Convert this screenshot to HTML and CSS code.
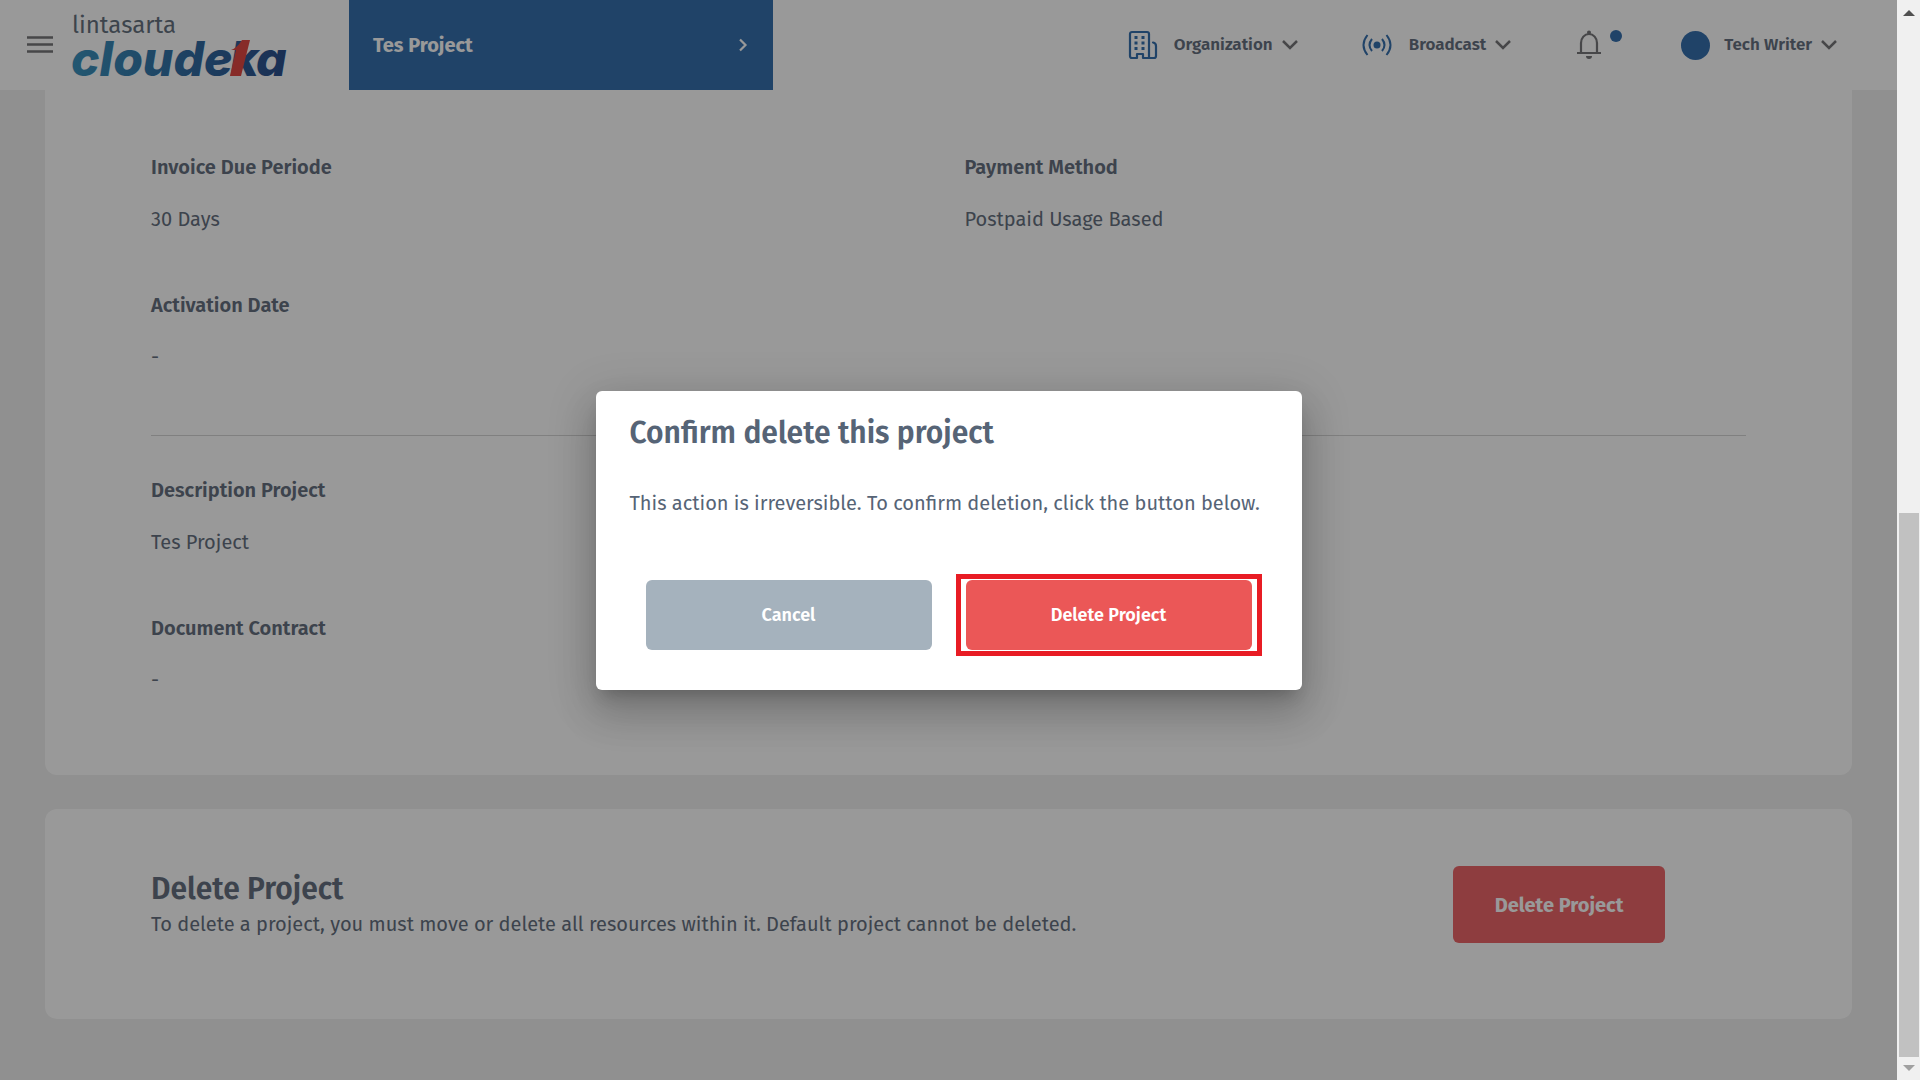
FILE: index.html
```html
<!DOCTYPE html>
<html lang="en">

<head>
    <meta charset="UTF-8">
    <meta name="viewport" content="width=device-width, initial-scale=1.0">
    <title>Project Detail</title>
    <link rel="stylesheet" href="styles.css">
</head>

<body>
    <div class="page">
        <!-- Header -->
        <header class="header">
            <button class="menu-btn" aria-label="Menu">
                <svg width="26" height="18" viewBox="0 0 26 18">
                    <path d="M0 1.5h26M0 8.5h26M0 15.5h26" stroke="#77777a" stroke-width="2.6" />
                </svg>
            </button>
            <a class="logo" href="#" aria-label="Lintasarta Cloudeka">
                <svg width="214" height="66" viewBox="0 0 214 66">
                    <defs>
                        <linearGradient id="logo-blue" gradientUnits="userSpaceOnUse" x1="0" y1="0" x2="212" y2="0">
                            <stop offset="0" stop-color="#3b92bd" />
                            <stop offset="0.5" stop-color="#326fa5" />
                            <stop offset="1" stop-color="#2c4f8c" />
                        </linearGradient>
                    </defs>
                    <text class="logo-top" x="-1" y="21">lintasarta</text>
                    <text class="logo-main" x="-2" y="64">cloude<tspan x="157">k</tspan><tspan x="183">a</tspan></text>
                    <path d="M169 28h8l-9 36h-11l6-26h-5q6-2 11-10z" fill="#e14944" />
                </svg>
            </a>
            <button class="project-btn">
                <span>Tes Project</span>
                <svg width="10" height="14" viewBox="0 0 10 14">
                    <path d="M2 1.5l5.500 5.500L2 12.500" fill="none" stroke="#fff" stroke-width="2.200" />
                </svg>
            </button>
            <nav class="nav">
                <button class="nav-item">
                    <svg width="28" height="28" viewBox="0 0 28 28" fill="none" stroke="#3670ae" stroke-width="2.200">
                        <path d="M20 27h-6v-4H8v4H3a2 2 0 0 1-2-2V3a2 2 0 0 1 2-2h15a2 2 0 0 1 2 2v24h5a2 2 0 0 0 2-2V15q0-3-3-3.500" stroke-linejoin="round" stroke-linecap="round" />
                        <path d="M5.500 6.500h3M12.500 6.500h3M5.500 12h3M12.500 12h3M5.500 17.500h3M12.500 17.500h3" stroke-width="3" />
                    </svg>
                    <span class="nav-text">Organization</span>
                    <svg class="chevron" width="16" height="10" viewBox="0 0 16 10">
                        <path d="M1 1l7 7 7-7" />
                    </svg>
                </button>
                <button class="nav-item">
                    <svg width="30" height="22" viewBox="0 0 30 22" fill="none" stroke="#3670ae" stroke-width="2">
                        <circle cx="15" cy="11" r="3.500" fill="#3670ae" stroke="none" />
                        <path d="M10 5q-5 6 0 12M20 5q5 6 0 12M5.500 1q-8 10 0 20M24.500 1q8 10 0 20" />
                    </svg>
                    <span class="nav-text">Broadcast</span>
                    <svg class="chevron" width="16" height="10" viewBox="0 0 16 10">
                        <path d="M1 1l7 7 7-7" />
                    </svg>
                </button>
                <button class="nav-item bell" aria-label="Notifications">
                    <svg width="46" height="30" viewBox="0 0 46 30">
                        <path d="M0 23h24M4 22V13a8 9 0 0 1 16 0v9M12 4V1" fill="none" stroke="#77777a" stroke-width="2.200" />
                        <circle cx="12" cy="2.500" r="2" fill="#77777a" />
                        <path d="M9 26h6a3 3 0 0 1-6 0z" fill="#77777a" />
                        <circle cx="39" cy="6" r="6" fill="#3670ae" />
                    </svg>
                </button>
                <button class="nav-item">
                    <span class="avatar"></span>
                    <span class="nav-text">Tech Writer</span>
                    <svg class="chevron" width="16" height="10" viewBox="0 0 16 10">
                        <path d="M1 1l7 7 7-7" />
                    </svg>
                </button>
            </nav>
        </header>

        <!-- Project data -->
        <main class="content">
            <section class="card detail">
                <dl class="fields">
                    <div class="field">
                        <dt>Invoice Due Periode</dt>
                        <dd>30 Days</dd>
                    </div>
                    <div class="field">
                        <dt>Payment Method</dt>
                        <dd>Postpaid Usage Based</dd>
                    </div>
                    <div class="field">
                        <dt>Activation Date</dt>
                        <dd>-</dd>
                    </div>
                </dl>
                <hr class="divider">
                <dl class="fields">
                    <div class="field full">
                        <dt>Description Project</dt>
                        <dd>Tes Project</dd>
                    </div>
                    <div class="field full">
                        <dt>Document Contract</dt>
                        <dd>-</dd>
                    </div>
                </dl>
            </section>

            <section class="card delete">
                <div class="delete-info">
                    <h2 class="title">Delete Project</h2>
                    <p class="text">To delete a project, you must move or delete all resources within it. Default project cannot be deleted.</p>
                </div>
                <button class="btn-delete">Delete Project</button>
            </section>
        </main>

        <!-- Confirmation modal -->
        <div class="overlay">
            <div class="modal" role="dialog" aria-modal="true" aria-labelledby="modal-title">
                <h2 class="title" id="modal-title">Confirm delete this project</h2>
                <p class="text">This action is irreversible. To confirm deletion, click the button below.</p>
                <div class="modal-buttons">
                    <button class="btn btn-cancel">Cancel</button>
                    <button class="btn btn-confirm">Delete Project</button>
                </div>
            </div>
        </div>
    </div>

    <!-- Scrollbar -->
    <div class="scrollbar">
        <svg width="12" height="6" viewBox="0 0 12 6">
            <path d="M0 6l6-6 6 6z" fill="#505050" />
        </svg>
        <div class="track">
            <div class="thumb"></div>
        </div>
        <svg width="12" height="6" viewBox="0 0 12 6">
            <path d="M0 0h12L6 6z" fill="#a0a0a0" />
        </svg>
    </div>
</body>

</html>
```
FILE: styles.css
```css
* {
    box-sizing: border-box;
}

body {
    margin: 0;
    height: 100vh;
    display: flex;
    overflow: hidden;
    font-family: "Fira Sans", "Noto Sans", sans-serif;
    font-size: 20px;
    line-height: 28px;
    color: #667180;
}

button {
    border: none;
    padding: 0;
    background: none;
    font: inherit;
    color: inherit;
    cursor: pointer;
}

svg {
    display: block;
    flex: none;
    overflow: visible;
}

.page {
    position: relative;
    flex: 1;
    background: #f0f0f0;
}

/* Header */
.header {
    display: flex;
    align-items: center;
    height: 90px;
    padding: 0 60px 0 27px;
    background: #fff;
}

.logo {
    margin-left: 20px;
}

.logo-top {
    font-size: 24px;
    fill: #66727f;
}

.logo-main {
    font-family: Inter, sans-serif;
    font-size: 48px;
    font-weight: 800;
    font-style: italic;
    fill: url(#logo-blue);
}

.project-btn {
    display: flex;
    align-items: center;
    justify-content: space-between;
    align-self: stretch;
    width: 424px;
    margin-left: 62px;
    padding: 0 25px 0 24px;
    background: #3670ae;
    color: #fff;
    font-weight: 700;
}

.nav {
    display: flex;
    align-items: center;
    gap: 58px;
    margin-left: auto;
}

.nav-item {
    display: flex;
    align-items: center;
    font-size: 17px;
    font-weight: 600;
}

.nav-item:first-child {
    margin-right: 6px;
}

.bell {
    margin-left: 8px;
}

.nav-text {
    margin: 0 9px 0 17px;
}

.avatar + .nav-text {
    margin-left: 14px;
}

.chevron path {
    fill: none;
    stroke: #77777a;
    stroke-width: 2.5;
}

.avatar {
    width: 29px;
    height: 29px;
    border-radius: 50%;
    background: #3670ae;
}

/* Cards */
.content {
    display: flex;
    flex-direction: column;
    gap: 34px;
    padding: 0 45px;
}

.card {
    background: #fff;
    border-radius: 12px;
}

.detail {
    padding: 63px 106px 81px;
    border-radius: 0 0 12px 12px;
}

.fields {
    display: grid;
    grid-template-columns: 1fr 1fr;
    gap: 58px 32px;
    margin: 0;
}

.full {
    grid-column: 1 / -1;
}

.field dt {
    font-weight: 600;
}

.field dd {
    margin: 24px 0 0;
}

.divider {
    margin: 64px 0 40px;
    border: none;
    border-top: 1px solid #d5d5d5;
}

.delete {
    display: flex;
    align-items: center;
    justify-content: space-between;
    padding: 57px 187px 76px 106px;
}

.delete-info {
    padding-bottom: 3px;
}

.title {
    margin: 0;
    font-size: 30px;
    font-weight: 600;
    line-height: 42px;
}

.text {
    margin: 0;
}

.btn-delete {
    width: 212px;
    height: 77px;
    border-radius: 6px;
    background: #ed6669;
    color: #fff;
    font-weight: 700;
}

/* Modal */
.overlay {
    position: absolute;
    inset: 0;
    display: flex;
    align-items: center;
    justify-content: center;
    background: rgba(0, 0, 0, 0.4);
}

.modal {
    padding: 21px 34px 40px;
    border-radius: 6px;
    background: #fff;
    color: #566476;
    box-shadow: 0 11px 15px -7px rgba(0, 0, 0, 0.2), 0 24px 38px 3px rgba(0, 0, 0, 0.14), 0 9px 46px 8px rgba(0, 0, 0, 0.12);
}

.modal .text {
    margin: 35px 0 63px;
}

.modal-buttons {
    display: flex;
    gap: 34px;
    padding: 0 16px;
}

.btn {
    width: 286px;
    height: 70px;
    border-radius: 6px;
    color: #fff;
    font-size: 18px;
    font-weight: 600;
}

.btn-cancel {
    background: #a5b2bd;
}

.btn-confirm {
    position: relative;
    background: #eb5757;
}

.btn-confirm::after {
    content: "";
    position: absolute;
    inset: -6px -10px;
    border: 5px solid #e81c24;
}

/* Scrollbar */
.scrollbar {
    display: flex;
    flex-direction: column;
    align-items: center;
    width: 23px;
    padding: 10px 0 9px;
    background: #f0f0f0;
}

.track {
    display: flex;
    align-items: flex-end;
    flex: 1;
    padding-bottom: 8px;
}

.thumb {
    width: 20px;
    height: calc(52% + 3px);
    background: #c1c1c1;
}
```
